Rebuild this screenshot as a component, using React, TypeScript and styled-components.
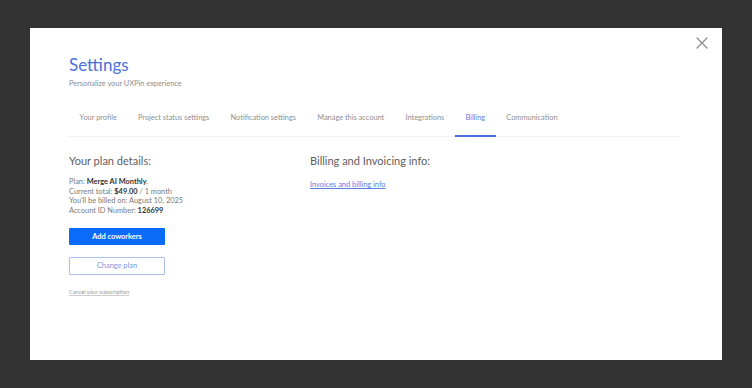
import styled, { createGlobalStyle } from "styled-components";

const GlobalStyle = createGlobalStyle`
	html, body {
		margin: 0;
		padding: 0;
		background: #333333;
	}
	body {
		font-family: Lato, "Open Sans", "Liberation Sans", sans-serif;
	}
`;

const Overlay = styled.div`
	width: 752px;
	height: 388px;
	display: flex;
	align-items: center;
	justify-content: center;
	background: #333333;
`;

const Modal = styled.div`
	position: relative;
	width: 692px;
	height: 332px;
	background: #ffffff;
	box-sizing: border-box;
	padding: 26px 42px 0 39px;
`;

const CloseButton = styled.button`
	position: absolute;
	top: 8px;
	right: 13px;
	width: 14px;
	height: 14px;
	padding: 0;
	border: none;
	background: none;
	cursor: pointer;
	color: #8a8a8a;
`;

const Title = styled.h1`
	margin: 0;
	font-size: 17px;
	font-weight: 400;
	color: #4a70d9;
	line-height: 22px;
`;

const Subtitle = styled.p`
	margin: 3px 0 0;
	font-size: 7.4px;
	color: #8c8c8c;
	line-height: 10px;
`;

const Tabs = styled.div`
	display: flex;
	margin-top: 16px;
	border-bottom: 1px solid #f1f1f1;
`;

const Tab = styled.div<{ $active?: boolean }>`
	padding: 8px 10.6px 12px;
	font-size: 7.4px;
	line-height: 10px;
	color: ${(p) => (p.$active ? "#5b7fe0" : "#8f8f8f")};
	border-bottom: 2px solid ${(p) => (p.$active ? "#4a70d9" : "transparent")};
	margin-bottom: -1px;
`;

const Columns = styled.div`
	display: grid;
	grid-template-columns: 241px 1fr;
	margin-top: 17px;
`;

const Column = styled.div`
	display: flex;
	flex-direction: column;
	align-items: flex-start;
`;

const Heading = styled.h2`
	margin: 0;
	font-size: 11px;
	font-weight: 400;
	color: #5e5e5e;
	line-height: 14px;
`;

const Details = styled.div`
	margin-top: 9px;
	font-size: 7.4px;
	line-height: 9.7px;
	color: #7a7a7a;

	b {
		color: #333333;
		font-weight: 700;
	}
`;

const PrimaryButton = styled.button`
	margin-top: 12px;
	width: 96px;
	height: 17px;
	border: none;
	border-radius: 1px;
	background: #0a6bf9;
	color: #ffffff;
	font-family: inherit;
	font-size: 7.4px;
	font-weight: 700;
	padding: 0;
`;

const OutlineButton = styled.button`
	margin-top: 12px;
	width: 96px;
	height: 18px;
	border: 1px solid #a9bdf0;
	border-radius: 1px;
	background: #ffffff;
	color: #7d97dd;
	font-family: inherit;
	font-size: 7.4px;
	padding: 0;
`;

const CancelLink = styled.a`
	margin-top: 13px;
	font-size: 5.6px;
	color: #9a9a9a;
	text-decoration: underline;
	text-decoration-color: #cfcfcf;
`;

const InvoiceLink = styled.a`
	margin-top: 12px;
	font-size: 7.4px;
	color: #5b7fe0;
	text-decoration: underline;
`;

const tabs = [
	"Your profile",
	"Project status settings",
	"Notification settings",
	"Manage this account",
	"Integrations",
	"Billing",
	"Communication",
];

export default function App() {
	return (
		<Overlay>
			<GlobalStyle />
			<Modal>
				<CloseButton aria-label="Close">
					<svg viewBox="0 0 14 14" width="14" height="14">
						<path
							d="M2 2 L12 12 M12 2 L2 12"
							stroke="currentColor"
							strokeWidth="1.2"
							strokeLinecap="round"
						/>
					</svg>
				</CloseButton>
				<Title>Settings</Title>
				<Subtitle>Personalize your UXPin experience</Subtitle>
				<Tabs>
					{tabs.map((t) => (
						<Tab key={t} $active={t === "Billing"}>
							{t}
						</Tab>
					))}
				</Tabs>
				<Columns>
					<Column>
						<Heading>Your plan details:</Heading>
						<Details>
							<div>
								Plan: <b>Merge AI Monthly</b>.
							</div>
							<div>
								Current total: <b>$49.00</b> / 1 month
							</div>
							<div>You'll be billed on: August 10, 2025</div>
							<div>
								Account ID Number: <b>126699</b>
							</div>
						</Details>
						<PrimaryButton>Add coworkers</PrimaryButton>
						<OutlineButton>Change plan</OutlineButton>
						<CancelLink>Cancel your subscription</CancelLink>
					</Column>
					<Column>
						<Heading>Billing and Invoicing info:</Heading>
						<InvoiceLink>Invoices and billing info</InvoiceLink>
					</Column>
				</Columns>
			</Modal>
		</Overlay>
	);
}
